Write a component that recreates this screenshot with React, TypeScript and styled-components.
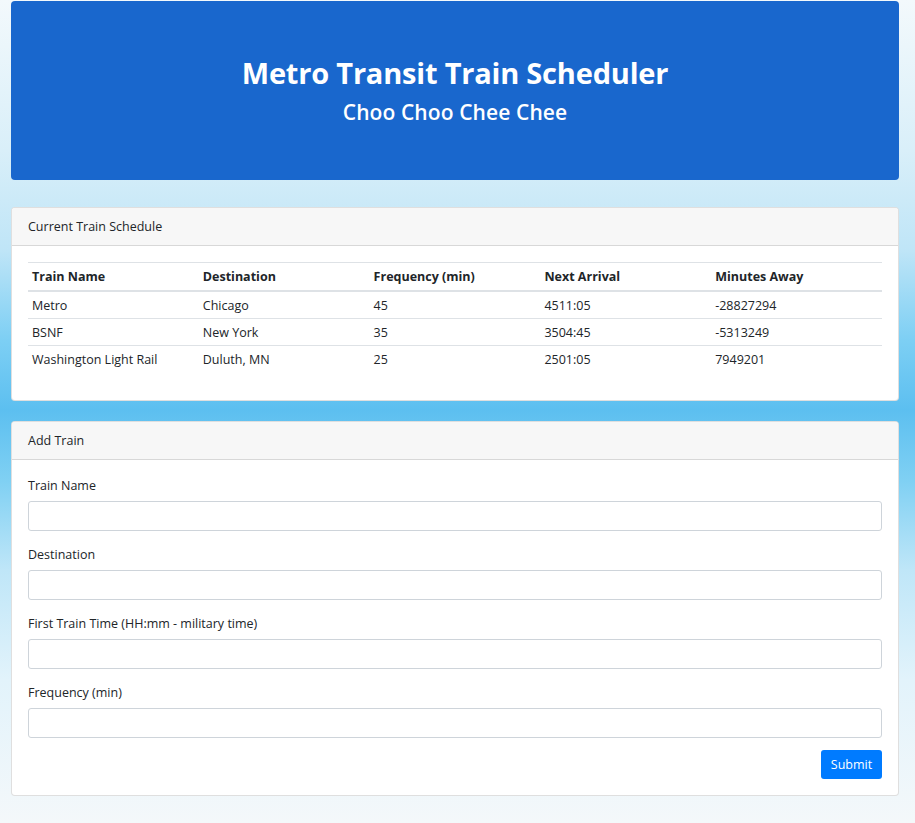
import React, { ReactElement } from "react";
import styled, { createGlobalStyle } from "styled-components";

/*
==========================
    Global
==========================
*/
const GlobalStyle = createGlobalStyle`
  html, body {
    margin: 0;
    padding: 0;
  }

  body {
    min-height: 823px;
    font-family: "Open Sans", "Noto Sans", sans-serif;
    color: #212529;
    background: linear-gradient(
      180deg,
      #f3f9fc 0px,
      #d9eff9 150px,
      #bfe5f7 250px,
      #7dcff4 340px,
      #5cbff0 410px,
      #7fd0f3 480px,
      #bfe6f8 570px,
      #e2f3fb 680px,
      #f4f8fa 823px
    );
  }
`;

/*
==========================
    Styled Components
==========================
*/
const Page = styled.div`
  /* Size */
  width: 888px;
  padding: 1px 0 27px 11px;
  display: flex;
  flex-direction: column;
`;

const Jumbotron = styled.header`
  /* Size */
  height: 179px;
  display: flex;
  flex-direction: column;
  align-items: center;
  justify-content: center;
  gap: 6px;
  padding-bottom: 2px;
  box-sizing: border-box;
  margin-bottom: 27px;

  /* Style */
  background: #1967cd;
  border-radius: 4px;
  color: #ffffff;
`;

const Title = styled.h1`
  margin: 0;
  font-size: 29px;
  font-weight: 700;
  line-height: 38px;
  letter-spacing: -0.2px;
`;

const Subtitle = styled.h3`
  margin: 0;
  font-size: 21px;
  font-weight: 600;
  line-height: 28px;
  letter-spacing: 0.1px;
`;

const Card = styled.section<{ $gap?: number }>`
  /* Size */
  margin-bottom: ${({ $gap }) => $gap ?? 0}px;

  /* Style */
  background: #ffffff;
  border: 1px solid rgba(0, 0, 0, 0.125);
  border-radius: 4px;
  overflow: hidden;
`;

const CardHeader = styled.div`
  /* Size */
  height: 37px;
  padding: 0 16px;
  display: flex;
  align-items: center;

  /* Style */
  background: #f7f7f7;
  border-bottom: 1px solid rgba(0, 0, 0, 0.125);
  font-size: 12.5px;
`;

const CardBody = styled.div<{ $top: number; $bottom: number }>`
  padding: ${({ $top }) => $top}px 16px ${({ $bottom }) => $bottom}px;
`;

const Table = styled.table`
  width: 100%;
  border-collapse: collapse;
  table-layout: fixed;
  font-size: 12.5px;
`;

const HeadCell = styled.th`
  height: 27px;
  padding: 0 4px;
  text-align: left;
  font-weight: 700;
  border-top: 1px solid #dee2e6;
  border-bottom: 2px solid #dee2e6;
`;

const Cell = styled.td<{ $first?: boolean }>`
  height: 26px;
  padding: 0 4px;
  border-top: ${({ $first }) => ($first ? "none" : "1px solid #dee2e6")};
`;

const Form = styled.form`
  display: flex;
  flex-direction: column;
`;

const Group = styled.div`
  display: flex;
  flex-direction: column;
  margin-bottom: 15px;
`;

const Label = styled.label`
  font-size: 12.5px;
  line-height: 18px;
  margin-bottom: 6px;
`;

const Input = styled.input`
  height: 30px;
  box-sizing: border-box;
  border: 1px solid #ced4da;
  border-radius: 3px;
  padding: 0 10px;
  font-family: inherit;
  font-size: 13px;
`;

const Actions = styled.div`
  display: flex;
  justify-content: flex-end;
  margin-top: -3px;
`;

const Button = styled.button`
  height: 29px;
  width: 61px;
  border: none;
  border-radius: 3px;
  background: #007bff;
  color: #ffffff;
  font-family: inherit;
  font-size: 12.5px;
  cursor: pointer;
`;

/*
==========================
    Data
==========================
*/
const columns = [
  "Train Name",
  "Destination",
  "Frequency (min)",
  "Next Arrival",
  "Minutes Away",
];

const trains = [
  ["Metro", "Chicago", "45", "4511:05", "-28827294"],
  ["BSNF", "New York", "35", "3504:45", "-5313249"],
  ["Washington Light Rail", "Duluth, MN", "25", "2501:05", "7949201"],
];

const fields = [
  "Train Name",
  "Destination",
  "First Train Time (HH:mm - military time)",
  "Frequency (min)",
];

/*
==========================
    React Element
==========================
*/
const App = (): ReactElement => {
  return (
    <>
      <GlobalStyle />
      <Page>
        <Jumbotron>
          <Title>Metro Transit Train Scheduler</Title>
          <Subtitle>Choo Choo Chee Chee</Subtitle>
        </Jumbotron>

        {/* Schedule */}
        <Card $gap={20}>
          <CardHeader>Current Train Schedule</CardHeader>
          <CardBody $top={16} $bottom={28}>
            <Table>
              <thead>
                <tr>
                  {columns.map((c) => (
                    <HeadCell key={c}>{c}</HeadCell>
                  ))}
                </tr>
              </thead>
              <tbody>
                {trains.map((row, i) => (
                  <tr key={row[0]}>
                    {row.map((v, j) => (
                      <Cell key={j} $first={i === 0}>
                        {v}
                      </Cell>
                    ))}
                  </tr>
                ))}
              </tbody>
            </Table>
          </CardBody>
        </Card>

        {/* Add train */}
        <Card>
          <CardHeader>Add Train</CardHeader>
          <CardBody $top={17} $bottom={16}>
            <Form onSubmit={(e) => e.preventDefault()}>
              {fields.map((f) => (
                <Group key={f}>
                  <Label>{f}</Label>
                  <Input type="text" />
                </Group>
              ))}
              <Actions>
                <Button type="submit">Submit</Button>
              </Actions>
            </Form>
          </CardBody>
        </Card>
      </Page>
    </>
  );
};

export default App;
